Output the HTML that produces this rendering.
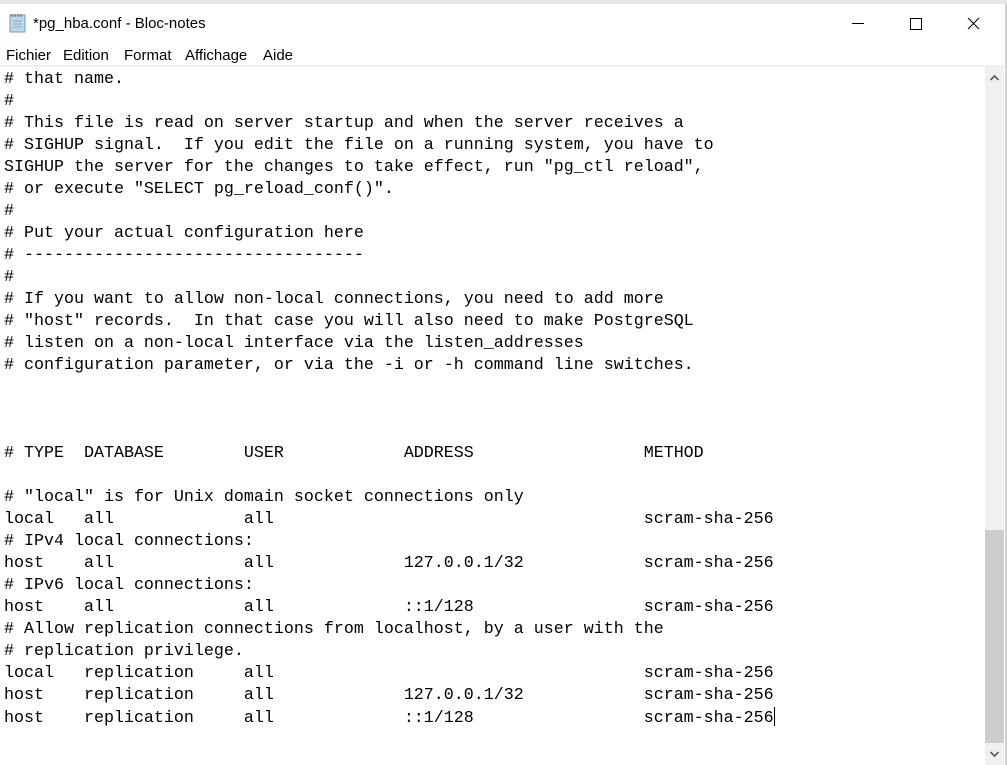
<!DOCTYPE html>
<html><head><meta charset="utf-8"><style>
body{margin:0;width:1007px;height:765px;overflow:hidden;background:#fff;position:relative;font-family:"Liberation Sans",sans-serif}
.top{position:absolute;left:0;top:0;width:1007px;height:4px;background:#e8e8e8}
.title{position:absolute;left:33px;top:15px;font-size:15px;color:#000}
.m{position:absolute;top:47px;font-size:15px;color:#000}
.sep{position:absolute;left:0;top:65px;width:1005px;height:2px;background:#f0f0f0}
pre{position:absolute;left:4px;top:69px;margin:0;font-family:"Liberation Mono",monospace;font-size:16.67px;line-height:22px;color:#000}
.sb{position:absolute;left:985px;top:67px;width:19px;height:698px;background:#f0f0f0}
.thumb{position:absolute;left:985px;top:530px;width:19px;height:213px;background:#cdcdcd}
.edge{position:absolute;left:1005px;top:4px;width:2px;height:761px;background:#d0d0d0}
.cur{display:inline-block;width:1px;height:19px;background:#000;vertical-align:-4px}
</style></head><body>
<div class="top"></div>
<svg style="position:absolute;left:8px;top:12px" width="20" height="22" viewBox="0 0 20 22"><rect x="2" y="3" width="15" height="17" fill="#bcd8ee" stroke="#7a99b8"/><path d="M4 2v3M7 2v3M10 2v3M13 2v3" stroke="#666"/><path d="M5 9h9M5 12h9M5 15h9" stroke="#8aa8c4"/></svg>
<div class="title">*pg_hba.conf - Bloc-notes</div>
<svg style="position:absolute;left:848px;top:15px" width="140" height="20"><path d="M4 8.5h12" stroke="#000"/><rect x="62.5" y="3.5" width="11" height="11" fill="none" stroke="#000"/><path d="M120 3l11 11M131 3l-11 11" stroke="#000"/></svg>
<div class="m" style="left:6px">Fichier</div>
<div class="m" style="left:63px">Edition</div>
<div class="m" style="left:124px">Format</div>
<div class="m" style="left:185px">Affichage</div>
<div class="m" style="left:263px">Aide</div>
<div class="sep"></div>
<pre># that name.
#
# This file is read on server startup and when the server receives a
# SIGHUP signal.  If you edit the file on a running system, you have to
SIGHUP the server for the changes to take effect, run "pg_ctl reload",
# or execute "SELECT pg_reload_conf()".
#
# Put your actual configuration here
# ----------------------------------
#
# If you want to allow non-local connections, you need to add more
# "host" records.  In that case you will also need to make PostgreSQL
# listen on a non-local interface via the listen_addresses
# configuration parameter, or via the -i or -h command line switches.



# TYPE  DATABASE        USER            ADDRESS                 METHOD

# "local" is for Unix domain socket connections only
local   all             all                                     scram-sha-256
# IPv4 local connections:
host    all             all             127.0.0.1/32            scram-sha-256
# IPv6 local connections:
host    all             all             ::1/128                 scram-sha-256
# Allow replication connections from localhost, by a user with the
# replication privilege.
local   replication     all                                     scram-sha-256
host    replication     all             127.0.0.1/32            scram-sha-256
host    replication     all             ::1/128                 scram-sha-256<span class="cur"></span></pre>
<div class="sb"></div>
<div class="thumb"></div>
<svg style="position:absolute;left:985px;top:70px" width="19" height="695"><path d="M5.5 10l4-4 4 4" stroke="#606060" stroke-width="1.8" fill="none"/><path d="M5.5 682l4 4 4-4" stroke="#606060" stroke-width="1.8" fill="none"/></svg>
<div class="edge"></div>
</body></html>
